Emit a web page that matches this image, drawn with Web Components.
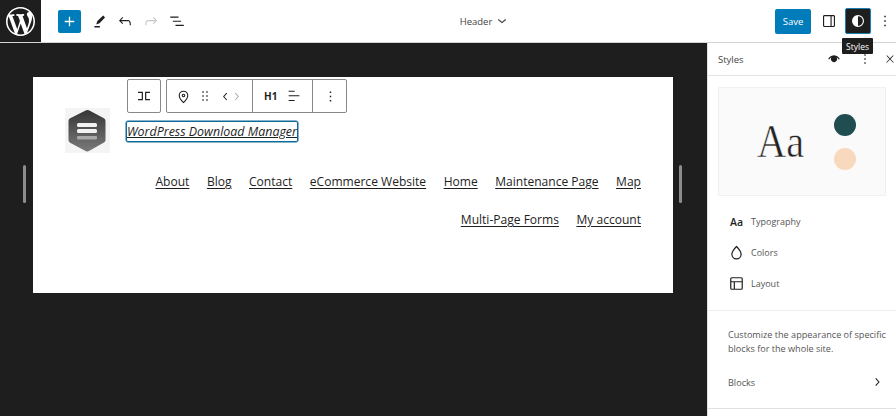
<!DOCTYPE html>
<html>
<head>
<meta charset="utf-8">
<title>Header</title>
<style>
  html, body { margin: 0; height: 100%; overflow: hidden; }
  body { font-family: "Open Sans", "Liberation Sans", sans-serif; color: #1e1e1e; }
</style>
</head>
<body>
<site-editor>
  <editor-topbar slot="top"></editor-topbar>
  <editor-canvas slot="canvas">
    <site-frame>
      <block-toolbar slot="toolbar"></block-toolbar>
      <site-logo slot="logo"></site-logo>
      <span slot="title">WordPress Download Manager</span>
      <nav-menu slot="nav" items="About,Blog,Contact,eCommerce Website,Home,Maintenance Page,Map,Multi-Page Forms,My account"></nav-menu>
    </site-frame>
  </editor-canvas>
  <styles-panel slot="side"></styles-panel>
</site-editor>

<script>
// icon paths, 24x24 like the wp ones
const icons = {
  plus: 'M18 11.2h-5.2V6h-1.6v5.2H6v1.6h5.2V18h1.6v-5.2H18z',
  brush: 'M19.8 6.2 17.2 3.6 9 11.4l-1.700 4.700 4.700-1.800L19.800 6.200ZM12.500 18.400H4.800v2h7.700v-2Z',
  undo: 'M18.3 11.7c-.6-.6-1.4-.9-2.3-.9H6.7l2.9-3.3-1.1-1-4.5 5L8.5 16l1-1-2.7-2.7H16c.5 0 .9.2 1.3.5 1 1 1 3.4 1 4.5v.3h1.5v-.2c0-1.5 0-4.3-1.5-5.7z',
  redo: 'M15.6 6.5l-1.1 1 2.9 3.3H8c-.9 0-1.7.3-2.3.9-1.4 1.5-1.4 4.2-1.4 5.6v.2h1.5v-.3c0-1.1 0-3.5 1-4.5.3-.3.7-.5 1.3-.5h9.2L14.5 15l1.1 1.1 4.6-4.6-4.6-5z',
  list: 'M3 6h11v1.5H3V6Zm3.5 5.5h11V13h-11v-1.5ZM21 17H10v1.5h11V17Z',
  sidebar: 'M18 4H6c-1.1 0-2 .9-2 2v12c0 1.1.9 2 2 2h12c1.1 0 2-.9 2-2V6c0-1.1-.9-2-2-2zm-4 14.5H6c-.3 0-.5-.2-.5-.5V6c0-.3.2-.5.5-.5h8v13zm4.5-.5c0 .3-.2.5-.5.5h-2.5v-13H18c.3 0 .5.2.5.5v12z',
  styles: 'M12 4a8 8 0 1 0 0 16 8 8 0 0 0 0-16Zm0 14.500v-13a6.500 6.500 0 0 1 0 13Z',
  more: 'M13 19h-2v-2h2v2zm0-6h-2v-2h2v2zm0-6h-2V5h2v2z',
  close: 'M13 11.8l6.1-6.3-1-1-6.1 6.2-6.1-6.2-1 1 6.1 6.3-6.5 6.7 1 1 6.5-6.6 6.5 6.6 1-1z',
  down: 'M17.5 10.600 12 15l-5.500-4.400.9-1.200L12 13l4.500-3.600 1 1.200z',
  right: 'M10.6 6 9.4 7l4.6 5-4.6 5 1.2 1 5.4-6z',
  left: 'M14.6 7l-1.2-1L8 12l5.4 6 1.2-1-4.6-5z',
  eye: 'M12 6.5c-4.6 0-7.4 3.4-8.7 5.6l1.3.8C5.5 11.500 6.900 10 8.800 9.100A4.500 4.500 0 1 0 15.200 9.100c1.900.9 3.300 2.400 4.200 3.800l1.300-.8C19.400 9.900 16.600 6.500 12 6.500Z',
  drag: 'M8 7h2V5H8v2zm0 6h2v-2H8v2zm0 6h2v-2H8v2zm6-14v2h2V5h-2zm0 8h2v-2h-2v2zm0 6h2v-2h-2v2z',
  align: 'M13 5.500H4V4h9v1.500Zm7 7H4V11h16v1.500Zm-7 7H4V18h9v1.500Z',
  layout: 'M18 5.500H6a.5.5 0 0 0-.5.5v3h13V6a.5.5 0 0 0-.5-.5zm.5 5H10v8h8a.5.5 0 0 0 .5-.5v-7.500zm-10 0h-3V18a.5.5 0 0 0 .5.5h2.500v-8zM6 4h12a2 2 0 0 1 2 2v12a2 2 0 0 1-2 2H6a2 2 0 0 1-2-2V6a2 2 0 0 1 2-2z',
  wp: 'M20 10c0-5.510-4.490-10-10-10C4.480 0 0 4.490 0 10c0 5.520 4.480 10 10 10 5.510 0 10-4.480 10-10zM7.780 15.370L4.370 6.220c.55-.02 1.170-.08 1.170-.08.5-.06.44-1.130-.06-1.110 0 0-1.450.11-2.370.11-.18 0-.37 0-.58-.01C4.120 2.690 6.870 1.110 10 1.110c2.330 0 4.450.87 6.050 2.340-.68-.11-1.650.39-1.650 1.580 0 .74.45 1.360.9 2.100.35.61.55 1.360.55 2.460 0 1.490-1.400 5-1.400 5l-3.030-8.370c.54-.02.82-.17.82-.17.5-.05.44-1.250-.06-1.220 0 0-1.440.12-2.380.12-.87 0-2.330-.12-2.330-.12-.5-.03-.56 1.200-.06 1.220l.92.08 1.260 3.410zM17.410 10c.24-.64.74-1.870.43-4.250.7 1.290 1.050 2.710 1.050 4.250 0 3.290-1.730 6.240-4.400 7.780.97-2.590 1.940-5.200 2.920-7.780zM6.100 18.090C3.120 16.650 1.110 13.530 1.110 10c0-1.300.23-2.480.72-3.590C3.250 10.300 4.670 14.200 6.100 18.090zm4.030-6.630l2.580 6.980c-.86.29-1.760.45-2.710.45-.79 0-1.570-.11-2.290-.33.81-2.380 1.620-4.740 2.420-7.100z'
};

function svg(name, size, color) {
  return `<svg width="${size}" height="${size}" viewBox="0 0 24 24" fill="${color || 'currentColor'}"><path d="${icons[name]}"/></svg>`;
}

class SiteEditor extends HTMLElement {
  constructor() {
    super();
    this.attachShadow({ mode: 'open' }).innerHTML = `
    <style>
      :host { display: grid; grid-template-rows: 43px 373px; grid-template-columns: 707px 189px; width: 896px; height: 416px; overflow: hidden; }
      .top { grid-column: 1 / 3; }
    </style>
    <div class="top"><slot name="top"></slot></div>
    <slot name="canvas"></slot>
    <slot name="side"></slot>`;
  }
}

class EditorTopbar extends HTMLElement {
  constructor() {
    super();
    this.attachShadow({ mode: 'open' }).innerHTML = `
    <style>
      :host { display: flex; position: relative; height: 43px; box-sizing: border-box; border-bottom: 1px solid #d4d4d4; background: #fff; align-items: center; }
      .logo { width: 41px; height: 42px; background: #1e1e1e; display: flex; align-items: center; justify-content: center; color: #fff; flex: none; padding-right: 1px; box-sizing: border-box; }
      .tools { display: flex; align-items: center; margin-left: 17px; }
      .add { width: 23px; height: 23px; background: #007cba; color: #fff; border-radius: 2px; display: flex; align-items: center; justify-content: center; margin-right: 5px; }
      .ico { width: 26px; height: 26px; display: flex; align-items: center; justify-content: center; color: #1e1e1e; }
      .ico.off { color: #c8c8c8; }
      .title { flex: 1; display: flex; justify-content: center; align-items: center; gap: 1px; font-size: 9.5px; color: #444; padding-left: 6px; }
      .right { display: flex; align-items: center; }
      .save { width: 36px; height: 25px; background: #007cba; color: #fff; border-radius: 2px; font-size: 9.5px; display: flex; align-items: center; justify-content: center; margin-right: 5px; }
      .styles { width: 26px; height: 26px; box-sizing: border-box; background: #1e1e1e; color: #fff; border: 1px solid #1c7fb0; border-radius: 2px; display: flex; align-items: center; justify-content: center; margin-left: 3px; }
      .tip { position: absolute; left: 842px; top: 38px; width: 31px; height: 16px; background: #1e1e1e; color: #fff; font-size: 8.5px; display: flex; align-items: center; justify-content: center; border-radius: 1px; z-index: 5; }
      .kebab { width: 25px; padding-left: 3px; box-sizing: border-box; }
    </style>
    <div class="logo"><svg width="29" height="29" viewBox="0 0 20 20" fill="currentColor"><path fill-rule="evenodd" d="${icons.wp}"/></svg></div>
    <div class="tools">
      <div class="add">${svg('plus', 19)}</div>
      <div class="ico">${svg('brush', 17)}</div>
      <div class="ico">${svg('undo', 18)}</div>
      <div class="ico off">${svg('redo', 18)}</div>
      <div class="ico">${svg('list', 18)}</div>
    </div>
    <div class="title"><span>Header</span>${svg('down', 18)}</div>
    <div class="right">
      <div class="save">Save</div>
      <div class="ico">${svg('sidebar', 18)}</div>
      <div class="styles">${svg('styles', 18)}</div>
      <div class="ico kebab">${svg('more', 18)}</div>
    </div>
    <div class="tip">Styles</div>`;
  }
}

class EditorCanvas extends HTMLElement {
  constructor() {
    super();
    this.attachShadow({ mode: 'open' }).innerHTML = `
    <style>
      :host { display: flex; align-items: flex-start; justify-content: space-between; background: #1e1e1e; height: 373px; padding: 34px 0 0 23px; box-sizing: border-box; }
      .handle { width: 3px; height: 38px; background: #8d8d8d; border-radius: 2px; margin-top: 88px; flex: none; }
      .mid { margin: 0 6px 0 7px; }
      .tail { margin-right: 26px; }
    </style>
    <div class="handle"></div>
    <div class="mid"><slot></slot></div>
    <div class="handle tail"></div>`;
  }
}

class SiteFrame extends HTMLElement {
  constructor() {
    super();
    this.attachShadow({ mode: 'open' }).innerHTML = `
    <style>
      :host { display: block; position: relative; width: 640px; height: 216px; background: #fff; box-sizing: border-box; padding: 31px 32px 0; }
      .toolbar { position: absolute; left: 94px; top: 2px; }
      .brand { display: flex; gap: 17px; align-items: flex-start; }
      .title { margin-top: 13px; font-size: 12.45px; line-height: 19px; font-style: italic; text-decoration: underline; border: 1px solid #0f6a99; border-radius: 2px; box-shadow: 0 0 0 .5px #0f6a99; height: 19px; white-space: nowrap; margin-left: -1px; }
      .nav { margin-top: 19px; }
    </style>
    <div class="toolbar"><slot name="toolbar"></slot></div>
    <div class="brand">
      <slot name="logo"></slot>
      <div class="title"><slot name="title"></slot></div>
    </div>
    <div class="nav"><slot name="nav"></slot></div>`;
  }
}

class SiteLogo extends HTMLElement {
  constructor() {
    super();
    this.attachShadow({ mode: 'open' }).innerHTML = `
    <style>
      :host { display: block; width: 45px; height: 45px; background: #f4f4f4; flex: none; }
      svg { display: block; }
    </style>
    <svg width="45" height="45" viewBox="0 0 45 45">
      <defs><linearGradient id="g" x1="0" y1="0" x2="0" y2="1"><stop offset="0" stop-color="#3a3a3a"/><stop offset="1" stop-color="#757575"/></linearGradient></defs>
      <path d="M22.500 5 37.500 13v19L22.500 40.500 6.500 32V13Z" fill="url(#g)" stroke="url(#g)" stroke-width="6" stroke-linejoin="round"/>
      <rect x="12" y="15" width="20" height="4" rx="1.500" fill="#f2f2f2"/>
      <rect x="12" y="21" width="20" height="4" rx="1.500" fill="#f2f2f2"/>
      <rect x="12" y="28" width="20" height="3.500" rx="1" fill="#a8a8a8"/>
    </svg>`;
  }
}

class BlockToolbar extends HTMLElement {
  constructor() {
    super();
    this.attachShadow({ mode: 'open' }).innerHTML = `
    <style>
      :host { display: flex; gap: 5px; height: 34px; font-size: 9.5px; color: #1e1e1e; }
      .group { display: flex; align-items: center; background: #fff; border: 1px solid #888; border-radius: 2px; box-sizing: border-box; height: 34px; }
      .group > div { display: flex; align-items: center; height: 100%; box-sizing: border-box; }
      .sep { border-left: 1px solid #888; }
      b { font-size: 10px; font-weight: 700; }
    </style>
    <div class="group" style="width:34px;justify-content:center">
      <svg width="16" height="16" viewBox="0 0 24 24" fill="none" stroke="currentColor" stroke-width="1.800"><path d="M3 6.500h6.500v11H3M21 6.500h-6.500v11H21"/></svg>
    </div>
    <div class="group" style="width:181px">
      <div style="width:85px;padding-left:8px;gap:5px">
        <svg width="17" height="17" viewBox="0 0 24 24" fill="none" stroke="currentColor" stroke-width="1.500"><path d="M12 20.500s-6-5.500-6-10a6 6 0 0 1 12 0c0 4.500-6 10-6 10Z"/><circle cx="12" cy="10.500" r="1.800"/></svg>
        ${svg('drag', 16)}
        <span style="display:flex">${svg('left', 15)}<span style="color:#aaa;display:flex;margin-left:-4px;transform:scaleX(-1)">${svg('left', 15)}</span></span>
      </div>
      <div class="sep" style="width:60px;padding-left:11px;gap:9px"><b>H1</b>${svg('align', 16)}</div>
      <div class="sep" style="flex:1;justify-content:center;padding-left:1px">${svg('more', 17)}</div>
    </div>`;
  }
}

class NavMenu extends HTMLElement {
  constructor() {
    super();
    const links = this.getAttribute('items').split(',').map(t => `<a>${t}</a>`).join('');
    this.attachShadow({ mode: 'open' }).innerHTML = `
    <style>
      :host { display: flex; flex-wrap: wrap; justify-content: flex-end; gap: 18px 17.5px; font-size: 12.05px; line-height: 20px; color: #1e1e1e; }
      a { text-decoration: underline; text-underline-offset: 2px; white-space: nowrap; }
    </style>${links}`;
  }
}

class PanelRow extends HTMLElement {
  constructor() {
    super();
    this.attachShadow({ mode: 'open' }).innerHTML = `
    <style>
      :host { display: flex; align-items: center; gap: 8px; height: 31px; font-size: 9px; color: #555; }
      .ico { width: 13px; display: flex; justify-content: center; color: #1e1e1e; font-size: 10.500px; font-weight: 600; }
      ::slotted(svg) { flex: none; }
    </style>
    <div class="ico"><slot name="icon"></slot></div>
    <slot></slot>`;
  }
}

class StylesPanel extends HTMLElement {
  constructor() {
    super();
    this.attachShadow({ mode: 'open' }).innerHTML = `
    <style>
      :host { display: block; background: #fff; border-left: 1px solid #e0e0e0; box-sizing: border-box; height: 373px; font-size: 9.1px; color: #555; }
      header { height: 33px; box-sizing: border-box; border-bottom: 1px solid #e4e4e4; display: flex; align-items: center; padding: 0 0 0 10px; color: #444; font-size: 9.5px; }
      header span { flex: 1; }
      header div { display: flex; justify-content: center; color: #1e1e1e; }
      .preview { margin: 11px 10px 0; height: 109px; background: #fafafa; border: 1px solid #f0f0f0; box-sizing: border-box; display: flex; align-items: center; }
      .aa { font-family: "Liberation Serif", serif; font-size: 47px; line-height: 1; color: #222; -webkit-text-stroke: .6px #fafafa; margin-left: 38px; transform: scaleX(.86); transform-origin: left; width: 77px; flex: none; }
      .dots { display: flex; flex-direction: column; gap: 12px; }
      .dots i { display: block; width: 22px; height: 22px; border-radius: 50%; }
      .rows { padding: 10px 0 11px 22px; }
      .rows svg { display: block; }
      .info { border-top: 1px solid #eee; height: 99px; padding: 17px 0 0 20px; box-sizing: border-box; border-bottom: 1px solid #e0e0e0; }
      .info p { margin: 0; line-height: 14px; white-space: nowrap; }
      .blocks { display: flex; justify-content: space-between; align-items: center; margin-top: 16px; height: 20px; color: #555; padding-right: 11px; }
      .blocks svg { color: #1e1e1e; }
    </style>
    <header>
      <span>Styles</span>
      <div style="width:28px">${svg('eye', 16)}</div>
      <div style="width:28px;margin-left:3px">${svg('more', 16)}</div>
      <div style="width:12px;margin-left:5px">${svg('close', 12)}</div>
    </header>
    <div class="preview">
      <div class="aa">Aa</div>
      <div class="dots"><i style="background:#1f4d50"></i><i style="background:#f8d9bd"></i></div>
    </div>
    <div class="rows">
      <panel-row><span slot="icon">Aa</span>Typography</panel-row>
      <panel-row><svg slot="icon" width="17" height="17" viewBox="0 0 24 24" fill="none" stroke="currentColor" stroke-width="1.700"><path d="M12 3.500S5.500 10 5.500 14.500a6.500 6.500 0 0 0 13 0C18.500 10 12 3.500 12 3.500Z"/></svg>Colors</panel-row>
      <panel-row><svg slot="icon" width="19" height="19" viewBox="0 0 24 24" fill="currentColor"><path d="${icons.layout}"/></svg>Layout</panel-row>
    </div>
    <div class="info">
      <p>Customize the appearance of specific<br>blocks for the whole site.</p>
      <div class="blocks"><span>Blocks</span>${svg('right', 16)}</div>
    </div>`;
  }
}

customElements.define('site-editor', SiteEditor);
customElements.define('editor-topbar', EditorTopbar);
customElements.define('editor-canvas', EditorCanvas);
customElements.define('site-frame', SiteFrame);
customElements.define('site-logo', SiteLogo);
customElements.define('block-toolbar', BlockToolbar);
customElements.define('nav-menu', NavMenu);
customElements.define('panel-row', PanelRow);
customElements.define('styles-panel', StylesPanel);
</script>
</body>
</html>
